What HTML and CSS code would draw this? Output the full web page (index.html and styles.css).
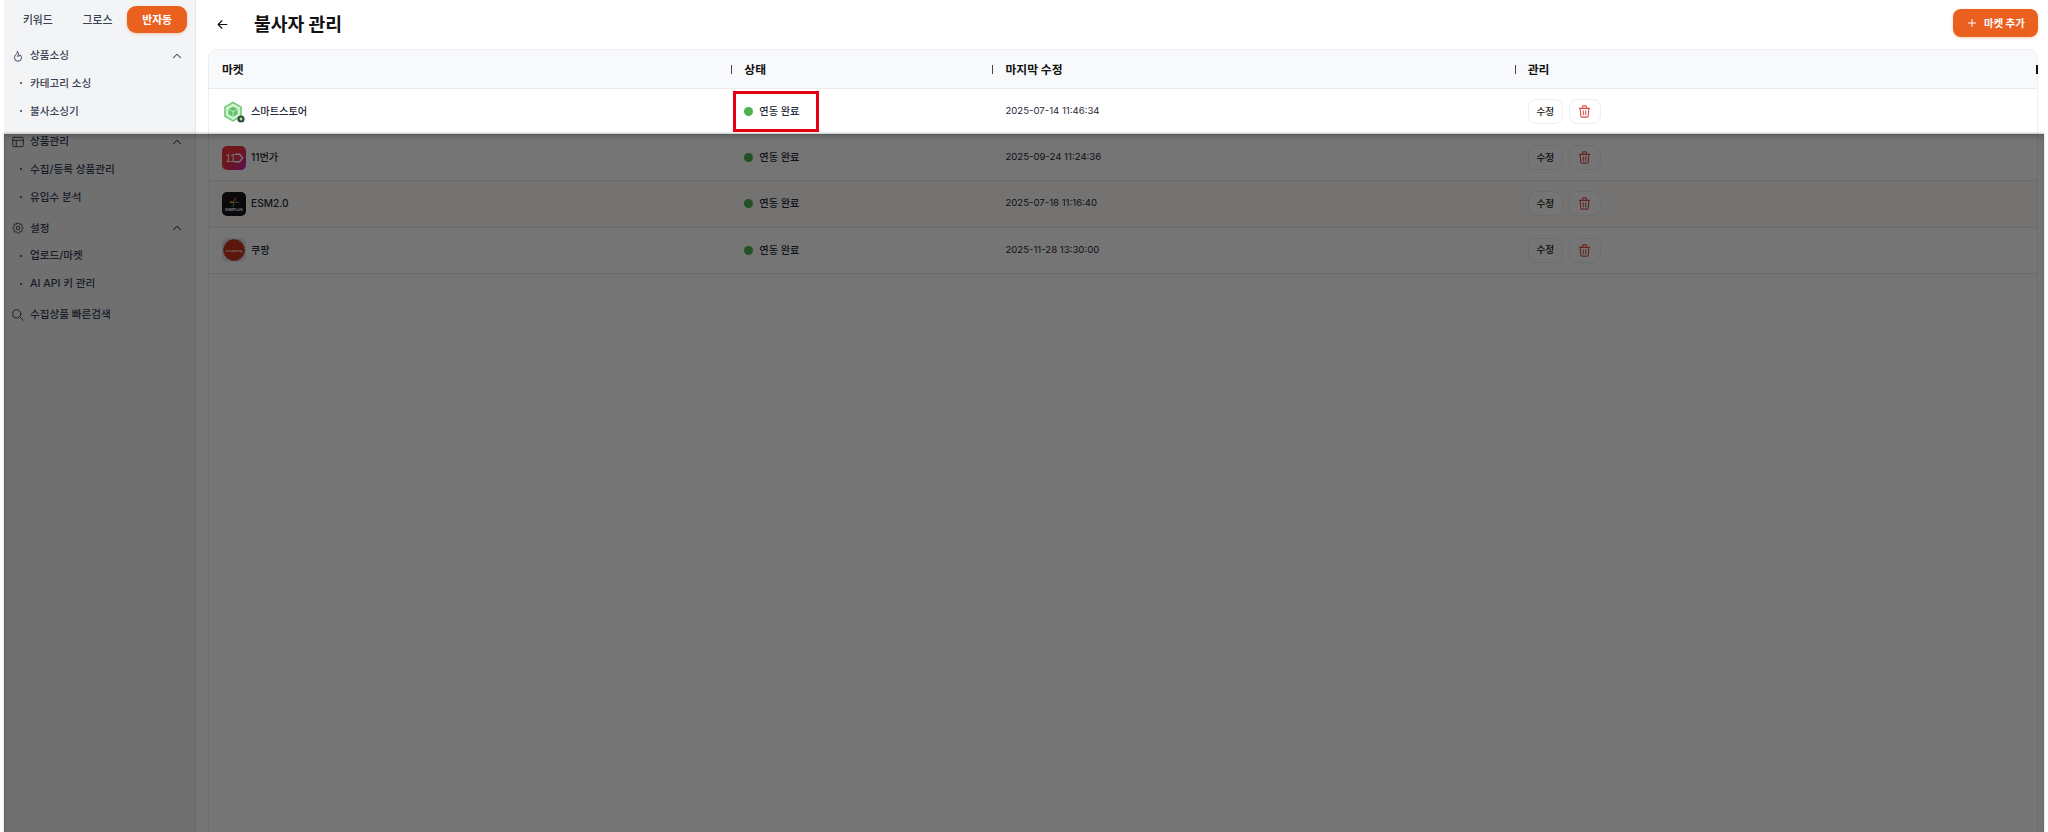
FILE: index.html
```html
<!DOCTYPE html>
<html lang="ko">
  <head>
    <meta charset="UTF-8" />
    <meta name="viewport" content="width=device-width, initial-scale=1.0" />
    <title>불사자 관리</title>
    <link rel="stylesheet" href="styles.css">
  </head>
  <body>
    <div class="frame">
      <aside class="sidebar">
        <div class="tabs">
          <div class="tab">키워드</div>
          <div class="tab">그로스</div>
          <div class="tab tab-active">반자동</div>
        </div>

        <nav class="nav">
          <div class="nav-group">
            <div class="nav-head">
              <svg class="nav-icon" viewBox="0 0 24 24"><path d="M12 12c2 -2.96 0 -7 -1 -8c0 3.038 -1.773 4.741 -3 6c-1.226 1.26 -2 3.24 -2 5a6 6 0 1 0 12 0c0 -1.532 -1.056 -3.94 -2 -5c-1.786 3 -2.791 3 -4 2z"/></svg>
              <span class="nav-label">상품소싱</span>
              <svg class="nav-chevron" viewBox="0 0 24 24"><path d="M6 15l6 -6l6 6"/></svg>
            </div>
            <div class="nav-sub">카테고리 소싱</div>
            <div class="nav-sub">불사소싱기</div>
          </div>
          <div class="nav-group">
            <div class="nav-head">
              <svg class="nav-icon" viewBox="0 0 24 24"><rect x="3" y="4" width="18" height="16" rx="2"/><path d="M3 9h18M9 9v11"/></svg>
              <span class="nav-label">상품관리</span>
              <svg class="nav-chevron" viewBox="0 0 24 24"><path d="M6 15l6 -6l6 6"/></svg>
            </div>
            <div class="nav-sub">수집/등록 상품관리</div>
            <div class="nav-sub">유입수 분석</div>
          </div>
          <div class="nav-group">
            <div class="nav-head">
              <svg class="nav-icon" viewBox="0 0 24 24"><path d="M10.325 4.317c.426 -1.756 2.924 -1.756 3.35 0a1.724 1.724 0 0 0 2.573 1.066c1.543 -.94 3.31 .826 2.37 2.37a1.724 1.724 0 0 0 1.065 2.572c1.756 .426 1.756 2.924 0 3.35a1.724 1.724 0 0 0 -1.066 2.573c.94 1.543 -.826 3.31 -2.37 2.37a1.724 1.724 0 0 0 -2.572 1.065c-.426 1.756 -2.924 1.756 -3.35 0a1.724 1.724 0 0 0 -2.573 -1.066c-1.543 .94 -3.31 -.826 -2.37 -2.37a1.724 1.724 0 0 0 -1.065 -2.572c-1.756 -.426 -1.756 -2.924 0 -3.35a1.724 1.724 0 0 0 1.066 -2.573c-.94 -1.543 .826 -3.31 2.37 -2.37c1 .608 2.296 .07 2.572 -1.065z"/><circle cx="12" cy="12" r="3"/></svg>
              <span class="nav-label">설정</span>
              <svg class="nav-chevron" viewBox="0 0 24 24"><path d="M6 15l6 -6l6 6"/></svg>
            </div>
            <div class="nav-sub">업로드/마켓</div>
            <div class="nav-sub">AI API 키 관리</div>
          </div>
          <div class="nav-head">
            <svg class="nav-icon" viewBox="0 0 24 24"><circle cx="10" cy="10" r="7"/><path d="M21 21l-6 -6"/></svg>
            <span class="nav-label">수집상품 빠른검색</span>
          </div>
        </nav>
      </aside>

      <main class="main">
        <header class="topbar">
          <svg class="back" viewBox="0 0 24 24"><path d="M5 12h14M5 12l6 6M5 12l6 -6"/></svg>
          <h1 class="title">불사자 관리</h1>
          <button class="add-btn">
            <svg class="add-icon" viewBox="0 0 24 24"><path d="M12 5v14M5 12h14"/></svg>
            마켓 추가
          </button>
        </header>

        <section class="table">
          <div class="row row-head">
            <div class="cell">마켓</div>
            <div class="cell">상태</div>
            <div class="cell">마지막 수정</div>
            <div class="cell">관리</div>
          </div>

          <div class="row">
            <div class="cell">
              <svg class="logo" viewBox="0 0 24 24">
                <path d="M11 2.5l8 4.6v9.2l-8 4.6l-8 -4.6v-9.2z" fill="#d5f2d6" stroke="#6fcb73" stroke-width="1.6"/>
                <path d="M11 6.5l4.6 2.6v5.2l-4.6 2.6l-4.6 -2.6v-5.2z" fill="#62c466"/>
                <path d="M6.4 9.1l4.6 2.6l4.6 -2.6M11 11.7v5.4" fill="none" stroke="#d5f2d6" stroke-width=".8"/>
                <circle cx="19" cy="19" r="3.6" fill="#2f4a38"/>
                <circle cx="19" cy="19" r="1.4" fill="#a9dcae"/>
              </svg>
              <span class="txt">스마트스토어</span>
            </div>
            <div class="cell"><span class="dot"></span><span class="txt">연동 완료</span></div>
            <div class="cell"><span class="txt date">2025-07-14 11:46:34</span></div>
            <div class="cell cell-actions">
              <button class="btn-edit">수정</button>
              <button class="btn-del"><svg class="trash" viewBox="0 0 24 24"><path d="M4 7h16M10 11v6M14 11v6M5 7l1 12a2 2 0 0 0 2 2h8a2 2 0 0 0 2 -2l1 -12M9 7v-3a1 1 0 0 1 1 -1h4a1 1 0 0 1 1 1v3"/></svg></button>
            </div>
          </div>

          <div class="row">
            <div class="cell">
              <svg class="logo" viewBox="0 0 24 24">
                <defs>
                  <linearGradient id="grad11" x1="0" y1="0" x2="1" y2="1">
                    <stop offset="0.45" stop-color="#f0343c"/>
                    <stop offset="1" stop-color="#c621b8"/>
                  </linearGradient>
                </defs>
                <rect width="24" height="24" rx="5" fill="url(#grad11)"/>
                <text class="logo-11" x="3.5" y="16.2">11</text>
                <path d="M12.5 8.2h5l3.2 3.8l-3.2 3.8h-5" fill="none" stroke="#fff" stroke-width="1.4"/>
              </svg>
              <span class="txt">11번가</span>
            </div>
            <div class="cell"><span class="dot"></span><span class="txt">연동 완료</span></div>
            <div class="cell"><span class="txt date">2025-09-24 11:24:36</span></div>
            <div class="cell cell-actions">
              <button class="btn-edit">수정</button>
              <button class="btn-del"><svg class="trash" viewBox="0 0 24 24"><path d="M4 7h16M10 11v6M14 11v6M5 7l1 12a2 2 0 0 0 2 2h8a2 2 0 0 0 2 -2l1 -12M9 7v-3a1 1 0 0 1 1 -1h4a1 1 0 0 1 1 1v3"/></svg></button>
            </div>
          </div>

          <div class="row row-hover">
            <div class="cell">
              <svg class="logo" viewBox="0 0 24 24">
                <rect width="24" height="24" rx="5" fill="#16171c"/>
                <path d="M12.6 5.5l-1 4h-3.6l-.4 1.4h3.6l.9 0.1z" fill="#f6b21b"/>
                <path d="M13 5.5h1.4l-.8 3.4h-1.2z" fill="#e8372c"/>
                <path d="M13 9.8h4l-.4 1.3h-3.6z" fill="#2e8fe0"/>
                <path d="M11 11.6h1.6l-.8 3h-1.4z" fill="#35b04a"/>
                <text class="logo-esm" x="12" y="19.2">ESMPLUS</text>
              </svg>
              <span class="txt">ESM2.0</span>
            </div>
            <div class="cell"><span class="dot"></span><span class="txt">연동 완료</span></div>
            <div class="cell"><span class="txt date">2025-07-18 11:16:40</span></div>
            <div class="cell cell-actions">
              <button class="btn-edit">수정</button>
              <button class="btn-del"><svg class="trash" viewBox="0 0 24 24"><path d="M4 7h16M10 11v6M14 11v6M5 7l1 12a2 2 0 0 0 2 2h8a2 2 0 0 0 2 -2l1 -12M9 7v-3a1 1 0 0 1 1 -1h4a1 1 0 0 1 1 1v3"/></svg></button>
            </div>
          </div>

          <div class="row">
            <div class="cell">
              <svg class="logo" viewBox="0 0 24 24">
                <rect width="24" height="24" rx="5" fill="#e6e6e6"/>
                <circle cx="12" cy="12" r="10.4" fill="#c9321b" stroke="#a52a14" stroke-width="1.2" stroke-dasharray="1.2 1"/>
                <text class="logo-coupang" x="12" y="13.6">coupang</text>
              </svg>
              <span class="txt">쿠팡</span>
            </div>
            <div class="cell"><span class="dot"></span><span class="txt">연동 완료</span></div>
            <div class="cell"><span class="txt date">2025-11-28 13:30:00</span></div>
            <div class="cell cell-actions">
              <button class="btn-edit">수정</button>
              <button class="btn-del"><svg class="trash" viewBox="0 0 24 24"><path d="M4 7h16M10 11v6M14 11v6M5 7l1 12a2 2 0 0 0 2 2h8a2 2 0 0 0 2 -2l1 -12M9 7v-3a1 1 0 0 1 1 -1h4a1 1 0 0 1 1 1v3"/></svg></button>
            </div>
          </div>
        </section>
      </main>

      <div class="dim"></div>
      <div class="highlight"></div>
    </div>
  </body>
</html>
```

FILE: styles.css
```css
* {
  box-sizing: border-box;
}

html,
body {
  margin: 0;
  height: 100%;
  overflow: hidden;
  background: #fff;
}

body {
  font-family: Inter, "Noto Sans CJK KR", "Noto Sans", sans-serif;
  color: #111827;
}

.frame {
  position: relative;
  display: flex;
  height: 832px;
  margin: 0 4px;
}

/* sidebar */
.sidebar {
  width: 192px;
  flex-shrink: 0;
  padding: 6px 8px 0 4px;
  background: #f3f4f6;
  border-right: 1px solid #e5e7eb;
}

.tabs {
  display: grid;
  grid-template-columns: repeat(3, 1fr);
  height: 27px;
}

.tab {
  display: flex;
  align-items: center;
  justify-content: center;
  padding-bottom: 2px;
  border-radius: 9px;
  font-size: 10.8px;
  font-weight: 500;
  color: #374151;
}

.tab-active {
  background: #e9601f;
  color: #fff;
  font-weight: 700;
  box-shadow: 0 1px 3px rgba(233, 96, 31, 0.3);
}

.nav {
  margin-top: 9px;
  display: flex;
  flex-direction: column;
  gap: 3.4px;
}

.nav-head {
  display: flex;
  align-items: center;
  height: 27px;
  padding-left: 3px;
  font-size: 10.6px;
  font-weight: 500;
  color: #374151;
}

.nav-icon {
  width: 14px;
  height: 14px;
  margin-right: 5px;
  fill: none;
  stroke: #374151;
  stroke-width: 1.6;
  stroke-linecap: round;
  stroke-linejoin: round;
}

.nav-label {
  flex: 1;
  margin-bottom: 2px;
}

.nav-chevron {
  width: 14px;
  height: 14px;
  margin-right: 3px;
  fill: none;
  stroke: #374151;
  stroke-width: 1.8;
  stroke-linecap: round;
  stroke-linejoin: round;
}

.nav-sub {
  position: relative;
  display: flex;
  align-items: center;
  height: 28px;
  padding: 0 0 2px 22px;
  font-size: 10.6px;
  font-weight: 500;
  color: #374151;
}

.nav-sub::before {
  content: "";
  position: absolute;
  left: 12px;
  top: 13px;
  width: 2px;
  height: 2px;
  border-radius: 50%;
  background: #374151;
}

/* main */
.main {
  flex: 1;
  min-width: 0;
  display: flex;
  flex-direction: column;
  padding: 0 6px 0 12px;
}

.topbar {
  display: flex;
  align-items: center;
  height: 49px;
  padding-left: 7px;
}

.back {
  width: 15px;
  height: 15px;
  fill: none;
  stroke: #111;
  stroke-width: 1.8;
  stroke-linecap: round;
  stroke-linejoin: round;
}

.title {
  flex: 1;
  margin: 0 0 3px 24px;
  font-size: 18.2px;
  font-weight: 700;
  color: #111;
}

.add-btn {
  display: flex;
  align-items: center;
  gap: 6px;
  height: 28px;
  width: 85px;
  margin-bottom: 3px;
  padding: 0 0 1px 13px;
  border: none;
  border-radius: 8px;
  background: #e9601f;
  color: #fff;
  font-family: inherit;
  font-size: 10.4px;
  font-weight: 700;
  box-shadow: 0 1px 3px rgba(233, 96, 31, 0.3);
}

.add-icon {
  width: 12px;
  height: 12px;
  fill: none;
  stroke: #fff;
  stroke-width: 2;
  stroke-linecap: round;
}

/* table */
.table {
  flex: 1;
  border: 1px solid #eceef1;
  border-bottom: none;
  border-radius: 9px 9px 0 0;
}

.row {
  display: grid;
  grid-template-columns: 2fr 1fr 2fr 2fr;
  height: 46.2px;
  border-bottom: 1px solid #e8eaed;
  font-size: 10.2px;
  font-weight: 500;
  color: #1f2937;
}

.row-hover {
  background: #fdfaf7;
}

.row-head {
  height: 39px;
  background: #f8f9fb;
  border-radius: 8px 8px 0 0;
  font-size: 11.8px;
  font-weight: 700;
  color: #111;
}

.row-head .cell {
  padding-bottom: 2px;
}

.cell {
  position: relative;
  display: flex;
  align-items: center;
  padding-left: 13px;
}

.row-head .cell::after {
  content: "";
  position: absolute;
  right: -1px;
  top: 15px;
  width: 1px;
  height: 9px;
  background: #444;
}

.row-head .cell:last-child::after {
  width: 2px;
  background: #111;
}

.txt {
  margin-bottom: 2px;
}

.date {
  font-size: 9.6px;
  font-weight: 400;
}

.logo {
  width: 24px;
  height: 24px;
  margin-right: 5px;
  flex-shrink: 0;
}

.logo-11 {
  font-family: "Liberation Sans", sans-serif;
  font-size: 10px;
  fill: #fff;
}

.logo-esm {
  font-family: "Liberation Sans", sans-serif;
  font-size: 3.6px;
  font-weight: 700;
  fill: #fff;
  text-anchor: middle;
}

.logo-coupang {
  font-family: "Liberation Sans", sans-serif;
  font-size: 4.4px;
  fill: #fff;
  text-anchor: middle;
}

.dot {
  width: 9px;
  height: 9px;
  margin-right: 6px;
  border-radius: 50%;
  background: #4caf50;
}

.cell-actions {
  gap: 6px;
}

.btn-edit,
.btn-del {
  display: flex;
  align-items: center;
  justify-content: center;
  height: 25px;
  padding: 0;
  background: #fff;
  border: 1px solid #eceef1;
  border-radius: 8px;
  font-family: inherit;
  font-size: 9.6px;
  font-weight: 500;
  color: #111;
}

.btn-edit {
  width: 35px;
  padding-bottom: 2px;
}

.btn-del {
  width: 32px;
}

.trash {
  width: 15px;
  height: 15px;
  fill: none;
  stroke: #dc4c46;
  stroke-width: 1.7;
  stroke-linecap: round;
  stroke-linejoin: round;
}

/* overlay and annotation */
.dim {
  position: absolute;
  left: 0;
  right: 0;
  top: 134px;
  bottom: 0;
  background: rgba(0, 0, 0, 0.54);
  box-shadow: 0 -1px 2px rgba(0, 0, 0, 0.25), inset 0 3px 4px rgba(0, 0, 0, 0.18);
}

.highlight {
  position: absolute;
  left: 729px;
  top: 91px;
  width: 86px;
  height: 41px;
  border: 3px solid #e60012;
}
```
